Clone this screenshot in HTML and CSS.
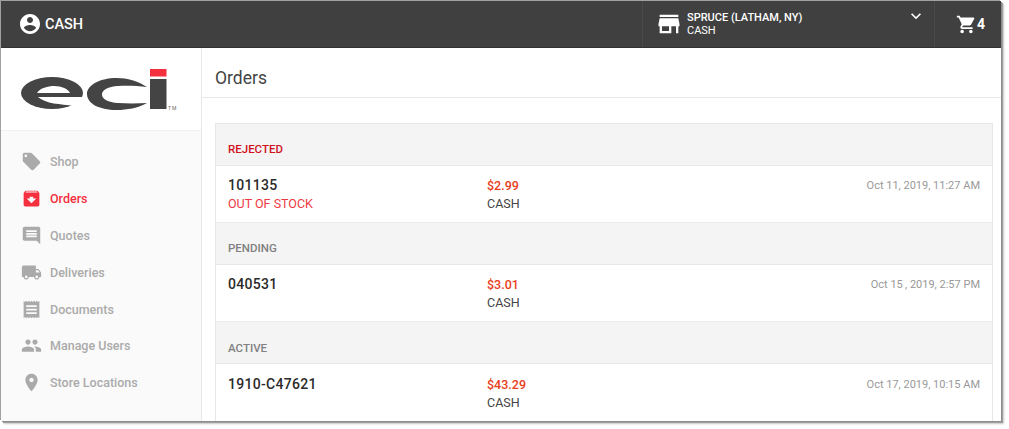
FILE: index.html
```html
<!doctype html>
<html lang="en">
<head>
    <meta charset="UTF-8">
    <title>Orders</title>
    <link rel="stylesheet" href="styles.css">
</head>
<body>
    <div class="app">
        <header class="topbar">
            <div class="account">
                <svg class="icon-account" viewBox="0 0 24 24"><path d="M12 2C6.48 2 2 6.48 2 12s4.48 10 10 10 10-4.48 10-10S17.52 2 12 2zm0 3c1.66 0 3 1.34 3 3s-1.34 3-3 3-3-1.34-3-3 1.34-3 3-3zm0 14.2c-2.5 0-4.71-1.28-6-3.22.03-1.99 4-3.08 6-3.08 1.99 0 5.97 1.09 6 3.08-1.29 1.94-3.5 3.22-6 3.22z"/></svg>
                <span>CASH</span>
            </div>
            <div class="store">
                <svg class="icon-store" viewBox="0 0 24 24"><path d="M20 4H4v2h16V4zm1 10v-2l-1-5H4l-1 5v2h1v6h10v-6h4v6h2v-6h1zm-9 4H6v-4h6v4z"/></svg>
                <div class="store-text">
                    <div class="store-name">SPRUCE (LATHAM, NY)</div>
                    <div class="store-sub">CASH</div>
                </div>
                <svg class="icon-chevron" viewBox="0 0 24 24"><path d="M16.59 8.59L12 13.17 7.41 8.59 6 10l6 6 6-6z"/></svg>
            </div>
            <div class="cart">
                <svg class="icon-cart" viewBox="0 0 24 24"><path d="M7 18c-1.1 0-1.99.9-1.99 2S5.9 22 7 22s2-.9 2-2-.9-2-2-2zM1 2v2h2l3.6 7.59-1.35 2.45c-.16.28-.25.61-.25.96 0 1.1.9 2 2 2h12v-2H7.42c-.14 0-.25-.11-.25-.25l.03-.12.9-1.63h7.45c.75 0 1.41-.41 1.75-1.03l3.58-6.49c.08-.14.12-.31.12-.48 0-.55-.45-1-1-1H5.21l-.94-2H1zm16 16c-1.1 0-1.99.9-1.99 2s.89 2 1.99 2 2-.9 2-2-.9-2-2-2z"/></svg>
                <span>4</span>
            </div>
        </header>
        <div class="layout">
            <aside class="sidebar">
                <div class="logo">
                    <svg width="165" height="44" viewBox="20 68 165 44">
                        <ellipse cx="52" cy="93" rx="31" ry="16" fill="#444"/>
                        <path d="M37 93C40 88 48 86 54 86C62 86 68 89 70 93Z" fill="#fff"/>
                        <path d="M38 97H86V106H74C60 104 46 104 38 97Z" fill="#fff"/>
                        <path d="M147 87C138 81 127 78 117 78C98 78 87 86 87 94C87 103 98 110 117 110C127 110 138 108 147 103C137 103.500 127 103.500 118 103C108 102.500 102 99 102 94.500C102 90 108 86.500 118 86C128 85.500 138 86 147 87Z" fill="#444"/>
                        <rect x="150" y="79" width="16.500" height="30" fill="#444"/>
                        <rect x="150" y="69" width="16.500" height="7.500" fill="#f5303e"/>
                        <text x="168" y="109.500" class="logo-tm">TM</text>
                    </svg>
                </div>
                <nav class="nav">
                    <a class="nav-item"><svg viewBox="0 0 24 24"><path d="M21.41 11.58l-9-9C12.05 2.22 11.55 2 11 2H4c-1.1 0-2 .9-2 2v7c0 .55.22 1.05.59 1.42l9 9c.36.36.86.58 1.41.58.55 0 1.05-.22 1.41-.59l7-7c.37-.36.59-.86.59-1.41 0-.55-.23-1.06-.59-1.42zM5.500 7C4.670 7 4 6.330 4 5.500S4.670 4 5.500 4 7 4.670 7 5.500 6.330 7 5.500 7z"/></svg>Shop</a>
                    <a class="nav-item active"><svg viewBox="0 0 24 24"><path d="M20.54 5.230l-1.390-1.680C18.880 3.210 18.470 3 18 3H6c-.47 0-.88.21-1.160.55L3.460 5.230C3.170 5.570 3 6.020 3 6.500V19c0 1.100.9 2 2 2h14c1.100 0 2-.9 2-2V6.500c0-.48-.17-.93-.46-1.270zM12 17.500L6.500 12H10v-2h4v2h3.500L12 17.500zM5.120 5l.81-1h12l.94 1H5.120z"/></svg>Orders</a>
                    <a class="nav-item"><svg viewBox="0 0 24 24"><path d="M21.990 4c0-1.100-.89-2-1.990-2H4c-1.100 0-2 .9-2 2v12c0 1.100.9 2 2 2h14l4 4-.01-18zM18 14H6v-2h12v2zm0-3H6V9h12v2zm0-3H6V6h12v2z"/></svg>Quotes</a>
                    <a class="nav-item"><svg viewBox="0 0 24 24"><path d="M20 8h-3V4H3c-1.100 0-2 .9-2 2v11h2c0 1.660 1.340 3 3 3s3-1.340 3-3h6c0 1.660 1.340 3 3 3s3-1.340 3-3h2v-5l-3-4zM6 18.500c-.83 0-1.500-.67-1.500-1.500s.67-1.500 1.500-1.500 1.500.67 1.500 1.500-.67 1.500-1.500 1.500zm13.500-9l1.960 2.500H17V9.500h2.500zm-1.500 9c-.83 0-1.500-.67-1.500-1.500s.67-1.500 1.500-1.500 1.500.67 1.500 1.500-.67 1.500-1.500 1.500z"/></svg>Deliveries</a>
                    <a class="nav-item"><svg viewBox="0 0 24 24"><path d="M18 17H6v-2h12v2zm0-4H6v-2h12v2zm0-4H6V7h12v2zM3 22l1.500-1.500L6 22l1.500-1.500L9 22l1.500-1.500L12 22l1.500-1.500L15 22l1.500-1.500L18 22l1.500-1.500L21 22V2l-1.500 1.500L18 2l-1.500 1.500L15 2l-1.500 1.500L12 2l-1.500 1.500L9 2 7.500 3.500 6 2 4.500 3.500 3 2v20z"/></svg>Documents</a>
                    <a class="nav-item"><svg viewBox="0 0 24 24"><path d="M16 11c1.660 0 2.990-1.340 2.990-3S17.660 5 16 5c-1.660 0-3 1.340-3 3s1.340 3 3 3zm-8 0c1.660 0 2.990-1.340 2.990-3S9.660 5 8 5C6.340 5 5 6.340 5 8s1.340 3 3 3zm0 2c-2.330 0-7 1.170-7 3.500V19h14v-2.500c0-2.330-4.670-3.500-7-3.500zm8 0c-.29 0-.62.02-.97.05 1.160.84 1.970 1.970 1.970 3.450V19h6v-2.500c0-2.330-4.670-3.500-7-3.500z"/></svg>Manage Users</a>
                    <a class="nav-item"><svg viewBox="0 0 24 24"><path d="M12 2C8.130 2 5 5.130 5 9c0 5.250 7 13 7 13s7-7.750 7-13c0-3.870-3.130-7-7-7zm0 9.500c-1.380 0-2.500-1.120-2.500-2.500s1.120-2.500 2.500-2.500 2.500 1.120 2.500 2.500-1.120 2.500-2.500 2.500z"/></svg>Store Locations</a>
                </nav>
            </aside>
            <main class="main">
                <h1 class="page-title">Orders</h1>
                <div class="orders">
                    <div class="group-head rejected">REJECTED</div>
                    <div class="order">
                        <div class="order-id">
                            <div class="order-num">101135</div>
                            <div class="order-status">OUT OF STOCK</div>
                        </div>
                        <div class="order-price">
                            <div class="price">$2.99</div>
                            <div class="pay">CASH</div>
                        </div>
                        <div class="order-date">Oct 11, 2019, 11:27 AM</div>
                    </div>
                    <div class="group-head">PENDING</div>
                    <div class="order">
                        <div class="order-id">
                            <div class="order-num">040531</div>
                        </div>
                        <div class="order-price">
                            <div class="price">$3.01</div>
                            <div class="pay">CASH</div>
                        </div>
                        <div class="order-date">Oct 15&#8201;, 2019, 2:57 PM</div>
                    </div>
                    <div class="group-head">ACTIVE</div>
                    <div class="order">
                        <div class="order-id">
                            <div class="order-num">1910-C47621</div>
                        </div>
                        <div class="order-price">
                            <div class="price">$43.29</div>
                            <div class="pay">CASH</div>
                        </div>
                        <div class="order-date">Oct 17, 2019, 10:15 AM</div>
                    </div>
                </div>
            </main>
        </div>
    </div>
</body>
</html>
```

FILE: styles.css
```css
html, body {
    height: 100%;
}

body {
    font-family: 'Roboto', 'Liberation Sans', sans-serif;
    color: #333;
    background-color: #fff;
    margin: 0;
    padding: 0;
    overflow: hidden;
}

.app {
    width: 1000px;
    height: 420px;
    margin: 1px 0 0 1px;
    display: flex;
    flex-direction: column;
    overflow: hidden;
    background: #fff;
    box-shadow: -1px -1px 0 #a0a0a0, 1px 1px 0 #8c8c8c, 2px 2px 1px #a0a0a0, 3px 3px 2px #d0d0d0;
}

/* top bar */
.topbar {
    flex: none;
    height: 47px;
    box-sizing: border-box;
    display: flex;
    align-items: stretch;
    background-color: #404040;
    border-bottom: 1px solid #333;
    color: #fff;
}

.topbar svg {
    fill: #fff;
    flex: none;
}

.account {
    flex: 1;
    display: flex;
    align-items: center;
    padding-left: 17px;
    font-size: 14.500px;
    font-weight: 500;
}

.icon-account {
    width: 24px;
    height: 24px;
    margin-right: 3px;
}

.store {
    width: 293px;
    box-sizing: border-box;
    display: flex;
    align-items: center;
    padding-left: 12px;
    border-left: 1px solid #4a4a4a;
    border-right: 1px solid #4a4a4a;
    position: relative;
}

.icon-store {
    width: 28px;
    height: 28px;
    margin-right: 4px;
}

.store-name {
    font-size: 11px;
    font-weight: 500;
    line-height: 13px;
}

.store-sub {
    font-size: 11px;
    line-height: 13px;
}

.icon-chevron {
    position: absolute;
    right: 8px;
    top: 5px;
    width: 20px;
    height: 20px;
}

.cart {
    width: 66px;
    display: flex;
    align-items: center;
    padding-left: 21px;
    box-sizing: border-box;
    font-size: 14px;
    font-weight: 700;
}

.icon-cart {
    width: 21px;
    height: 21px;
}

/* sidebar */
.layout {
    flex: 1;
    display: flex;
    min-height: 0;
}

.sidebar {
    flex: none;
    width: 201px;
    box-sizing: border-box;
    background: #fafafa;
    border-right: 1px solid #e8e8e8;
}

.logo {
    height: 83px;
    box-sizing: border-box;
    background: #fff;
    border-bottom: 1px solid #f0f0f0;
    padding: 20px 0 0 19px;
}

.logo svg {
    display: block;
}

.logo-tm {
    font-size: 5px;
    letter-spacing: 1px;
    fill: #666;
}

.nav {
    padding-top: 12px;
}

.nav-item {
    display: flex;
    align-items: center;
    height: 36.900px;
    padding-left: 20px;
    font-size: 12.500px;
    font-weight: 500;
    color: #aaa;
}

.nav-item svg {
    width: 21px;
    height: 21px;
    margin-right: 8px;
    fill: #aaa;
}

.nav-item.active {
    color: #f5303e;
}

.nav-item.active svg {
    fill: #f5303e;
}

/* orders */
.main {
    flex: 1;
    min-width: 0;
}

.page-title {
    margin: 0;
    height: 50px;
    box-sizing: border-box;
    padding: 19px 0 0 13px;
    font-size: 17.500px;
    line-height: 22px;
    font-weight: 400;
    color: #444;
    border-bottom: 1px solid #e8e8e8;
}

.orders {
    margin: 25px 8px 0 13px;
    border: 1px solid #e6e6e6;
}

.group-head {
    height: 41.700px;
    box-sizing: border-box;
    padding: 18.200px 0 0 12px;
    font-size: 11.500px;
    line-height: 14px;
    font-weight: 500;
    color: #808080;
    background: #f4f4f4;
    border-bottom: 1px solid #e8e8e8;
}

.group-head.rejected {
    color: #d0121f;
}

.order {
    height: 57.500px;
    box-sizing: border-box;
    display: flex;
    padding: 10.450px 12px 0;
    border-bottom: 1px solid #ececec;
}

.order-id {
    width: 259px;
}

.order-num {
    font-size: 14px;
    line-height: 18px;
    font-weight: 500;
    letter-spacing: 0.3px;
    color: #2b2b2b;
}

.order-status {
    font-size: 12.500px;
    line-height: 19px;
    color: #ee3a43;
}

.order-price {
    flex: 1;
    font-size: 12.500px;
    line-height: 19px;
}

.price {
    font-weight: 500;
    color: #e8401c;
}

.pay {
    line-height: 17px;
    color: #444;
}

.order-date {
    font-size: 11px;
    line-height: 19px;
    color: #999;
}
```
